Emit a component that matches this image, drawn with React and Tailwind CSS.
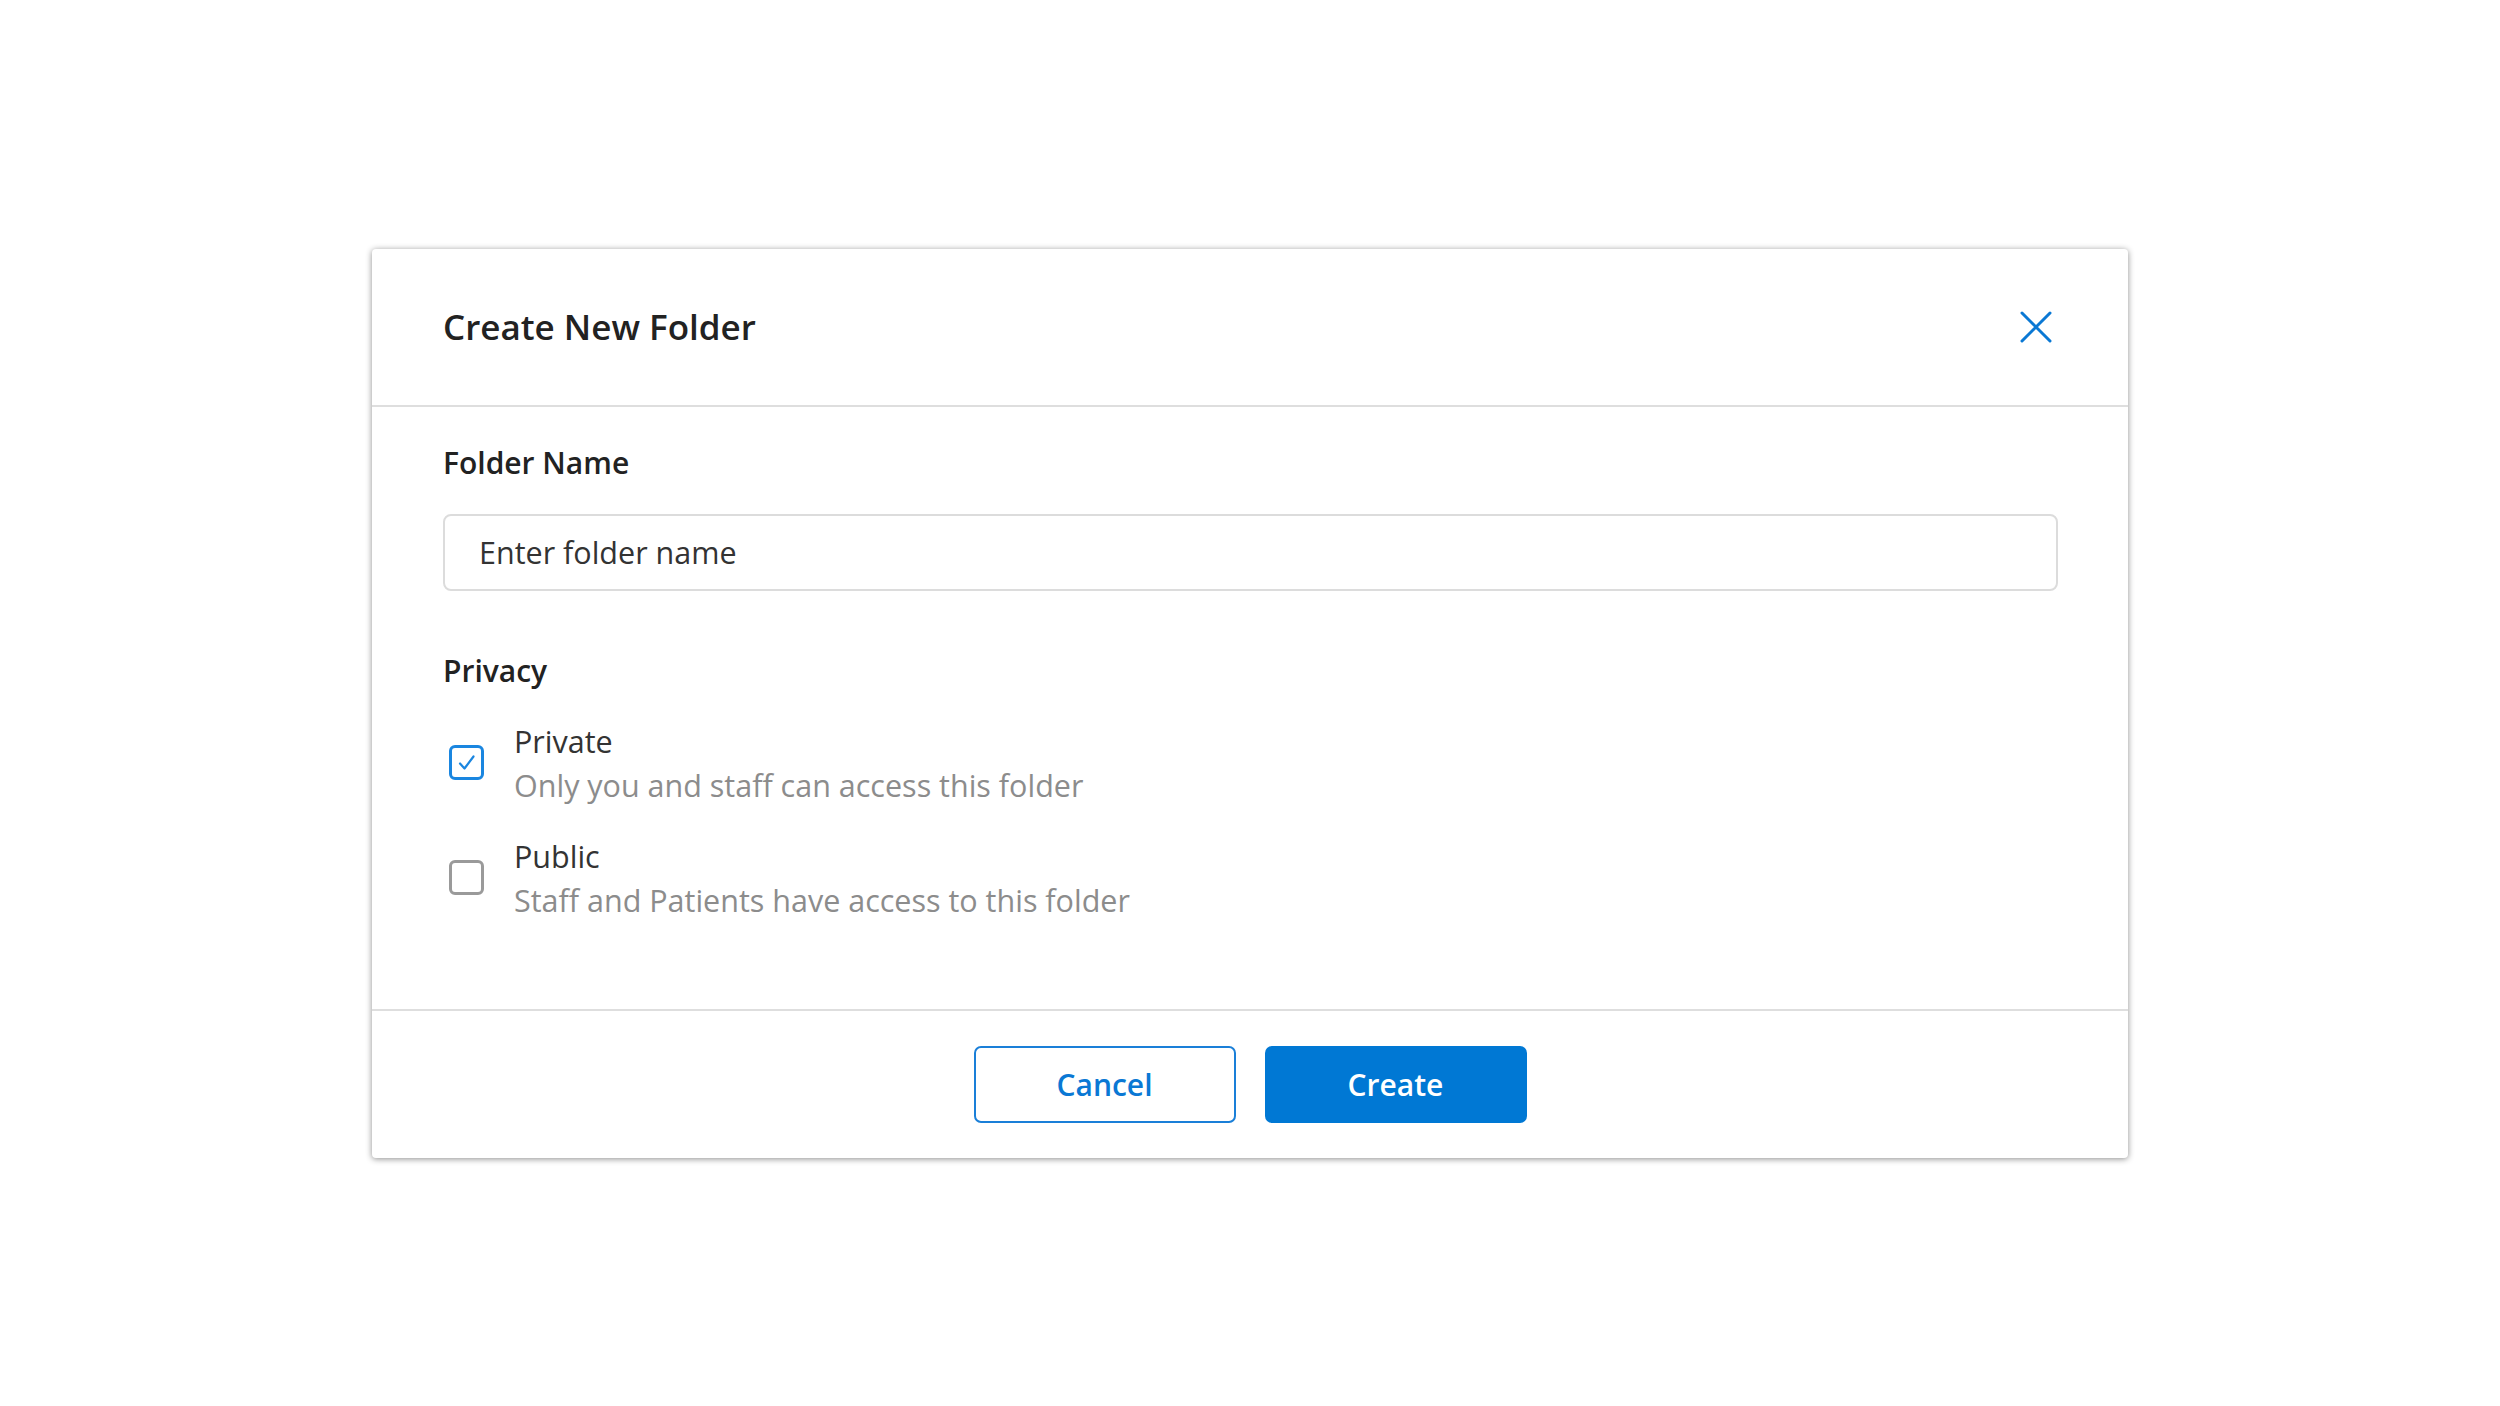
export default function App() {
  return (
    <div className="flex min-h-screen items-center justify-center bg-white font-['Open_Sans',sans-serif]">
      <div className="flex w-[1756px] flex-col rounded-[4px] bg-white shadow-[0_1px_6px_rgba(0,0,0,0.45)]">
        {/* header */}
        <div className="flex h-[158px] items-center justify-between border-b-2 border-[#dedede] pl-[71px] pr-[75px]">
          <h2 className="text-[35px] font-semibold leading-none text-[#222]">Create New Folder</h2>
          <button className="flex h-[34px] w-[34px] items-center justify-center text-[#0a78d4]">
            <svg width="32" height="32" viewBox="0 0 32 32" fill="none" stroke="currentColor" strokeWidth="3" strokeLinecap="round">
              <path d="M2 2 L30 30 M30 2 L2 30" />
            </svg>
          </button>
        </div>

        {/* body */}
        <div className="flex flex-col pl-[71px] pr-[70px] pt-[36px] pb-[87px]">
          <label className="text-[30px] font-semibold leading-[40px] text-[#222]">Folder Name</label>
          <div className="mt-[31px] flex h-[77px] items-center rounded-[8px] border-2 border-[#dcdcdc] px-[34px]">
            <span className="text-[30.5px] leading-none text-[#333]">Enter folder name</span>
          </div>

          <p className="mt-[60px] text-[30px] font-semibold leading-[40px] text-[#222]">Privacy</p>

          <div className="mt-[28px] flex flex-col gap-[27px]">
            <div className="flex items-center gap-[30px]">
              <span className="ml-[6px] flex h-[35px] w-[35px] items-center justify-center rounded-[6px] border-[3px] border-[#1a86e0]">
                <svg width="22" height="22" viewBox="0 0 22 22" fill="none" stroke="#1a86e0" strokeWidth="2.2" strokeLinecap="round" strokeLinejoin="round">
                  <path d="M4 11.5 L8.5 16.5 L17.5 4.5" />
                </svg>
              </span>
              <div className="flex flex-col">
                <span className="text-[30.5px] leading-[44px] text-[#333]">Private</span>
                <span className="text-[30.5px] leading-[44px] text-[#8c8c8c]">Only you and staff can access this folder</span>
              </div>
            </div>
            <div className="flex items-center gap-[30px]">
              <span className="ml-[6px] h-[35px] w-[35px] rounded-[6px] border-[3px] border-[#9a9a9a]" />
              <div className="flex flex-col">
                <span className="text-[30.5px] leading-[44px] text-[#333]">Public</span>
                <span className="text-[30.5px] leading-[44px] text-[#8c8c8c]">Staff and Patients have access to this folder</span>
              </div>
            </div>
          </div>
        </div>

        {/* footer */}
        <div className="flex h-[149px] items-center justify-center gap-[29px] border-t-2 border-[#dedede]">
          <button className="h-[77px] w-[262px] rounded-[7px] border-2 border-[#1a7fd8] bg-white text-[30px] font-semibold text-[#0a78d4]">
            Cancel
          </button>
          <button className="h-[77px] w-[262px] rounded-[7px] bg-[#0078d4] text-[30px] font-semibold text-white">
            Create
          </button>
        </div>
      </div>
    </div>
  );
}
